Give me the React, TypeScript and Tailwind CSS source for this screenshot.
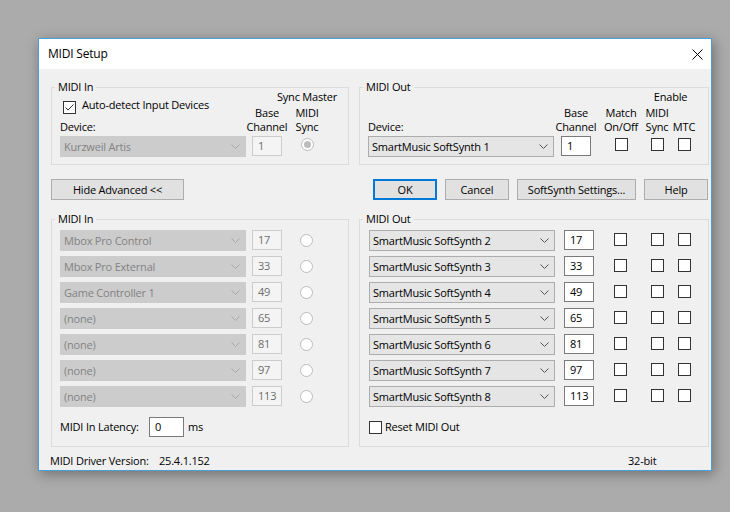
import clsx from "clsx";

const IN_ROWS = [
  { name: "Mbox Pro Control", ch: 17 },
  { name: "Mbox Pro External", ch: 33 },
  { name: "Game Controller 1", ch: 49 },
  { name: "(none)", ch: 65 },
  { name: "(none)", ch: 81 },
  { name: "(none)", ch: 97 },
  { name: "(none)", ch: 113 },
];

const OUT_ROWS = [2, 3, 4, 5, 6, 7, 8].map((n, i) => ({
  name: `SmartMusic SoftSynth ${n}`,
  ch: 17 + i * 16,
}));

function Chevron({ disabled }: { disabled?: boolean }) {
  return (
    <svg width="9" height="5" viewBox="0 0 9 5" className="shrink-0">
      <path
        d="M0.5 0.5 L4.5 4.5 L8.5 0.5"
        fill="none"
        stroke={disabled ? "#a8a8a8" : "#555555"}
        strokeWidth={1}
      />
    </svg>
  );
}

function Select({ value, disabled, className }: { value: string; disabled?: boolean; className?: string }) {
  return (
    <div
      className={clsx(
        "flex h-[21px] w-[186px] shrink-0 items-center justify-between border pl-[3px] pr-[5px] leading-[16px]",
        disabled ? "border-[#cccccc] bg-[#cccccc] text-[#838383]" : "border-[#adadad] bg-[#e5e5e5] text-black",
        className
      )}
    >
      <span className="whitespace-nowrap">{value}</span>
      <Chevron disabled={disabled} />
    </div>
  );
}

function NumBox({ value, disabled, className }: { value: string | number; disabled?: boolean; className?: string }) {
  return (
    <div
      className={clsx(
        "flex h-[20px] w-[30px] shrink-0 items-center border pl-[5px] leading-[16px]",
        disabled ? "border-[#cccccc] bg-[#f4f4f4] text-[#6d6d6d]" : "border-[#7a7a7a] bg-white text-black",
        className
      )}
    >
      {value}
    </div>
  );
}

function Check({ checked, className }: { checked?: boolean; className?: string }) {
  return (
    <span
      className={clsx(
        "flex h-[13px] w-[13px] shrink-0 items-center justify-center border border-[#333333] bg-white",
        className
      )}
    >
      {checked && (
        <svg width="11" height="11" viewBox="0 0 11 11">
          <path d="M1.5 5.5 L4 8 L9.5 2.5" fill="none" stroke="#333333" strokeWidth={1} />
        </svg>
      )}
    </span>
  );
}

function Radio({ selected }: { selected?: boolean }) {
  return (
    <span className="flex h-[13px] w-[13px] shrink-0 items-center justify-center rounded-full border border-[#bcbcbc] bg-white">
      {selected && <span className="h-[7px] w-[7px] rounded-full bg-[#bcbcbc]" />}
    </span>
  );
}

function Btn({ children, focused, className }: { children: React.ReactNode; focused?: boolean; className?: string }) {
  return (
    <div
      className={clsx(
        "flex h-[21px] shrink-0 items-center justify-center bg-[#e1e1e1] leading-[16px]",
        focused ? "border-2 border-[#0078d7]" : "border border-[#adadad]",
        className
      )}
    >
      {children}
    </div>
  );
}

// two-line column caption, centred over its control
function Head({ top, bottom, className }: { top: string; bottom: string; className?: string }) {
  return (
    <div className={clsx("flex shrink-0 justify-center", className)}>
      <span className="whitespace-nowrap text-center">
        {top || "\u00a0"}
        <br />
        {bottom}
      </span>
    </div>
  );
}

function Group({ title, className, children }: { title: string; className?: string; children: React.ReactNode }) {
  return (
    <fieldset className={clsx("shrink-0 border border-[#dcdcdc] px-[8px]", className)}>
      <legend className="-ml-[5px] px-[3px] leading-[14px]">{title}</legend>
      {children}
    </fieldset>
  );
}

export default function App() {
  return (
    <div className="h-[512px] w-[730px] overflow-hidden bg-[#ababab] pl-[38px] pt-[38px] font-['Segoe_UI','Open_Sans',sans-serif] text-[11px] tracking-[-0.2px] text-black">
      <div className="flex h-[433px] w-[674px] flex-col border border-[#4a9fd8] shadow-[2px_3px_12px_rgba(0,0,0,0.35)]">
        {/* title bar */}
        <div className="flex h-[30px] shrink-0 items-center bg-white pl-[9px]">
          <span className="text-[12px]">MIDI Setup</span>
          <svg width="11" height="11" viewBox="0 0 11 11" className="ml-auto mr-[8px]">
            <path d="M0.5 0.5 L10.5 10.5 M10.5 0.5 L0.5 10.5" stroke="#000000" strokeWidth={1} />
          </svg>
        </div>

        <div className="flex flex-1 flex-col bg-[#f0f0f0] pl-[12px] pr-[2px] pt-[11px]">
          {/* basic settings */}
          <div className="flex gap-[10px]">
            <Group title="MIDI In" className="h-[85px] w-[298px]">
              <div className="flex">
                <div className="w-[186px]">
                  <div className="mt-[3px] flex h-[16px] items-start gap-[6px] pl-[3px] leading-[16px]">
                    <Check checked className="mt-[4px]" />
                    <span>Auto-detect Input Devices</span>
                  </div>
                  <div className="mt-[6px] leading-[16px]">Device:</div>
                  <Select className="mt-[1px]" value="Kurzweil Artis" disabled />
                </div>
                <div className="-mt-[4px] ml-[6px] flex flex-col leading-[14px]">
                  <div className="w-[85px] whitespace-nowrap text-right">Sync Master</div>
                  <div className="mt-[2px] flex">
                    <Head top="Base" bottom="Channel" className="w-[30px]" />
                    <Head top="MIDI" bottom="Sync" className="ml-[10px] w-[30px]" />
                  </div>
                  <div className="mt-[2px] flex">
                    <NumBox value="1" disabled />
                    <div className="ml-[10px] flex w-[30px] justify-center pt-[2px]">
                      <Radio selected />
                    </div>
                  </div>
                </div>
              </div>
            </Group>

            <Group title="MIDI Out" className="h-[85px] w-[350px]">
              <div className="flex">
                <div className="w-[186px]">
                  <div className="mt-[25px] leading-[16px]">Device:</div>
                  <Select className="mt-[1px]" value="SmartMusic SoftSynth 1" />
                </div>
                <div className="-mt-[4px] ml-[7px] flex flex-col leading-[14px]">
                  <div className="ml-[83px] w-[53px] text-center">Enable</div>
                  <div className="mt-[2px] flex">
                    <Head top="Base" bottom="Channel" className="w-[30px]" />
                    <Head top="Match" bottom="On/Off" className="ml-[10px] w-[40px]" />
                    <Head top="MIDI" bottom="Sync" className="ml-[3px] w-[26px]" />
                    <Head top="" bottom="MTC" className="ml-[1px] w-[26px]" />
                  </div>
                  <div className="mt-[2px] flex items-start">
                    <NumBox value="1" />
                    <div className="ml-[10px] flex w-[40px] justify-center pt-[2px]">
                      <Check />
                    </div>
                    <div className="ml-[3px] flex w-[26px] justify-center pt-[2px]">
                      <Check />
                    </div>
                    <div className="ml-[1px] flex w-[26px] justify-center pt-[2px]">
                      <Check />
                    </div>
                  </div>
                </div>
              </div>
            </Group>
          </div>

          {/* buttons */}
          <div className="mt-[14px] flex">
            <Btn className="w-[133px]">Hide Advanced &lt;&lt;</Btn>
            <div className="ml-auto mr-[1px] flex gap-[8px]">
              <Btn focused className="w-[64px]">OK</Btn>
              <Btn className="w-[64px]">Cancel</Btn>
              <Btn className="w-[119px]">SoftSynth Settings...</Btn>
              <Btn className="w-[64px]">Help</Btn>
            </div>
          </div>

          {/* advanced */}
          <div className="mt-[12px] flex gap-[10px]">
            <Group title="MIDI In" className="h-[235px] w-[298px]">
              <div className="mt-[4px] flex flex-col gap-[5px]">
                {IN_ROWS.map((r, i) => (
                  <div key={i} className="flex h-[21px]">
                    <Select value={r.name} disabled />
                    <NumBox className="ml-[6px]" value={r.ch} disabled />
                    <div className="ml-[18px] flex h-[20px] items-center">
                      <Radio />
                    </div>
                  </div>
                ))}
              </div>
              <div className="mt-[10px] flex h-[20px] items-center leading-[16px]">
                <span className="w-[89px] shrink-0 whitespace-nowrap">MIDI In Latency:</span>
                <NumBox className="w-[35px]" value="0" />
                <span className="ml-[4px]">ms</span>
              </div>
            </Group>

            <Group title="MIDI Out" className="h-[235px] w-[350px]">
              <div className="mt-[4px] flex flex-col gap-[5px]">
                {OUT_ROWS.map((r) => (
                  <div key={r.name} className="flex h-[21px] items-start">
                    <Select className="ml-[1px]" value={r.name} />
                    <NumBox className="ml-[9px]" value={r.ch} />
                    <Check className="ml-[20px] mt-[3px]" />
                    <Check className="ml-[24px] mt-[3px]" />
                    <Check className="ml-[14px] mt-[3px]" />
                  </div>
                ))}
              </div>
              <div className="mt-[10px] flex h-[20px] items-center leading-[16px]">
                <Check className="ml-[1px]" />
                <span className="ml-[3px]">Reset MIDI Out</span>
              </div>
            </Group>
          </div>

          {/* status */}
          <div className="-ml-[1px] mt-[6px] flex leading-[16px]">
            <div className="flex w-[578px] shrink-0">
              <span className="w-[109px] shrink-0">MIDI Driver Version:</span>
              <span>25.4.1.152</span>
            </div>
            <span>32-bit</span>
          </div>
        </div>
      </div>
    </div>
  );
}
